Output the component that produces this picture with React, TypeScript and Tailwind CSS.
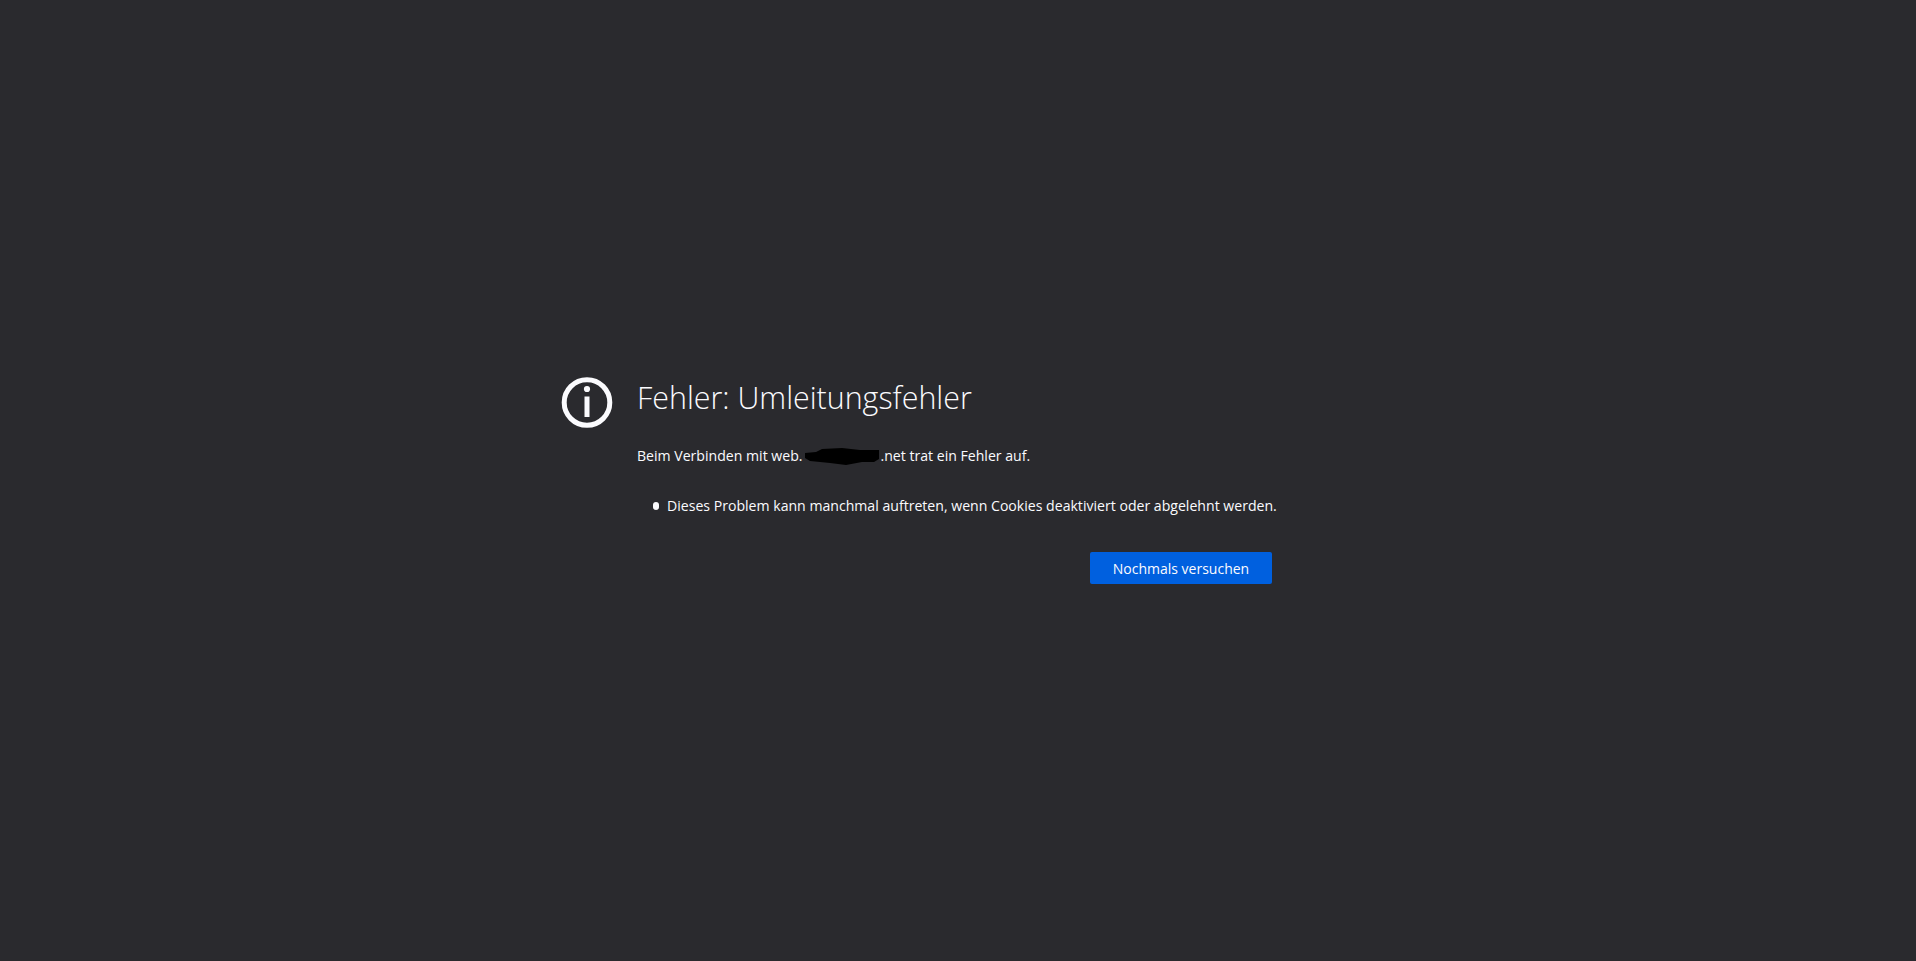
export default function App() {
  return (
    <div className="flex min-h-screen items-center justify-center bg-[#2a2a2e] font-['Open_Sans',sans-serif] text-[#fbfbfe]">
      <div className="flex w-[794px] gap-6">
        <svg className="h-[52px] w-[52px] shrink-0" viewBox="0 0 52 52" fill="none">
          <circle cx="26" cy="25.5" r="22.8" stroke="#fbfbfe" strokeWidth="5" />
          <circle cx="26" cy="12" r="3.1" fill="#fbfbfe" />
          <rect x="23.5" y="19.5" width="5" height="20.5" fill="#fbfbfe" />
        </svg>
        <div className="w-[635px]">
          <h1 className="text-[30.4px] leading-[42px] font-light whitespace-nowrap">Fehler: Umleitungsfehler</h1>
          <p className="mt-[27px] text-[14.1px] leading-[20px] whitespace-nowrap">
            Beim Verbinden mit web.
            <svg className="inline-block h-[20px] w-[78px] align-[-5px]" viewBox="0 0 78 20">
              <path d="M3 7 L14 6 L20 3 L40 2 L58 4 L77 4 L77 13 L72 16 L60 16 L44 19 L28 17 L8 15 L3 12 Z" fill="#000" />
            </svg>
            .net trat ein Fehler auf.
          </p>
          <ul className="mt-[30px] pl-4 text-[14.1px] leading-[20px] whitespace-nowrap">
            <li className="flex items-center gap-2">
              <span className="h-2 w-[6px] shrink-0 rounded-full bg-[#fbfbfe]" />
              Dieses Problem kann manchmal auftreten, wenn Cookies deaktiviert oder abgelehnt werden.
            </li>
          </ul>
          <div className="mt-9 flex justify-end">
            <button className="h-8 w-[182px] rounded-[2px] bg-[#0060df] text-[14px] text-[#fbfbfe]">Nochmals versuchen</button>
          </div>
        </div>
      </div>
    </div>
  );
}
